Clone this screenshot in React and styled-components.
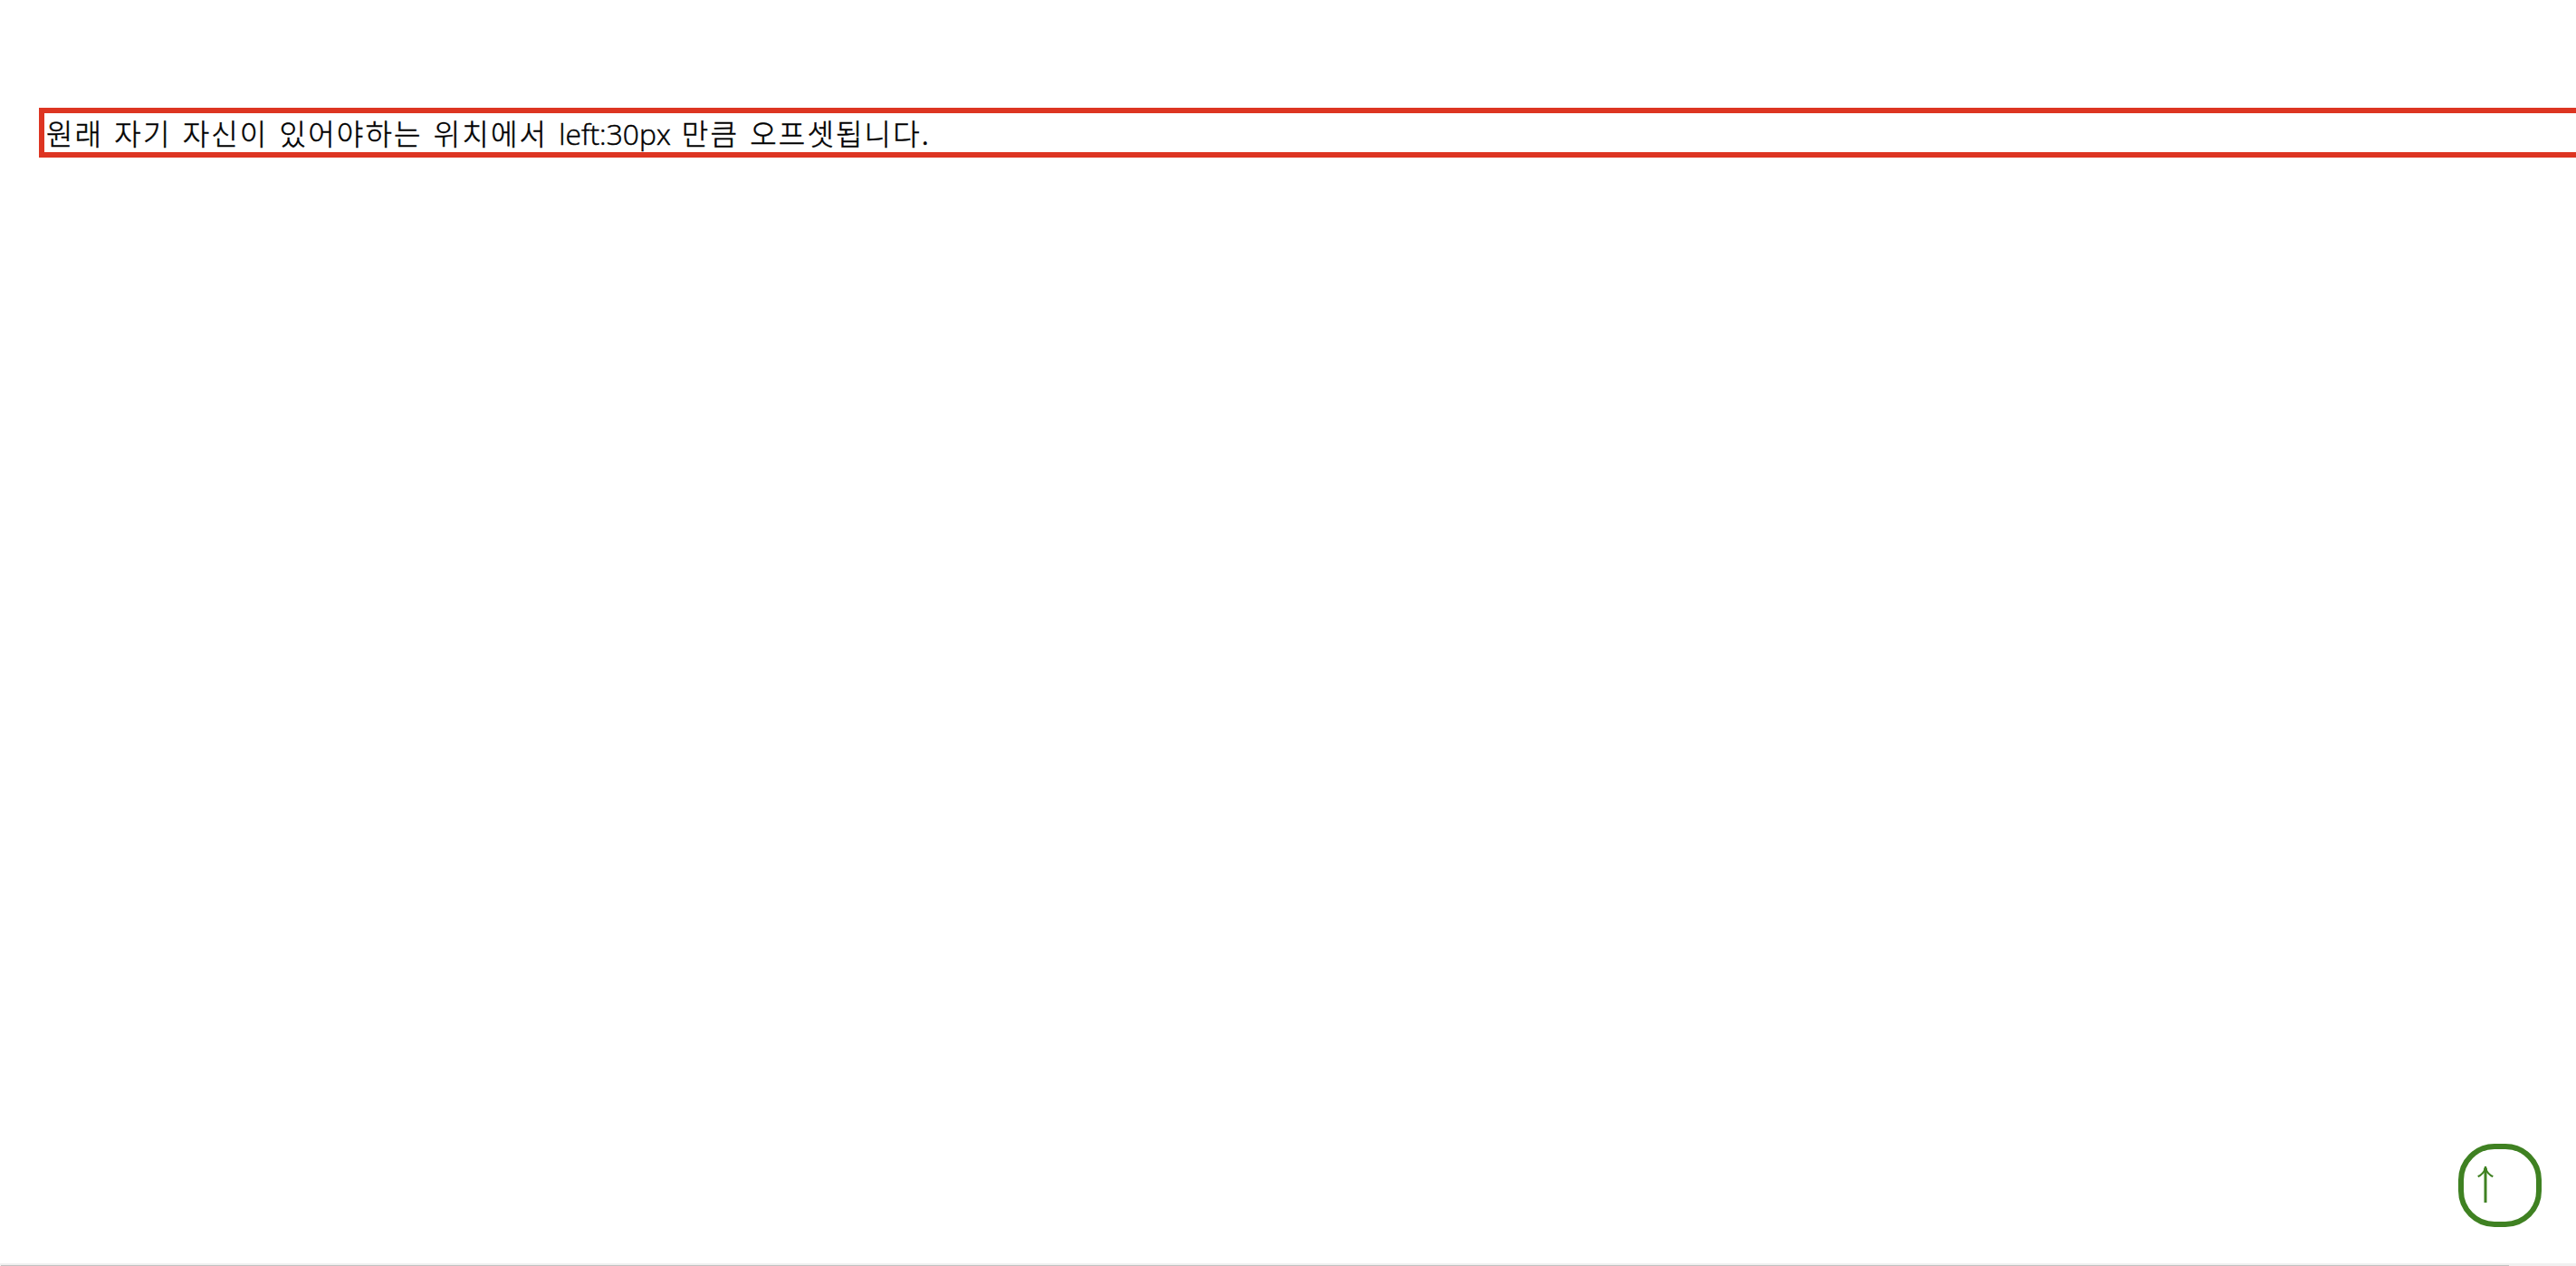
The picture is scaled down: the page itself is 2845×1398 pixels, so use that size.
import React from 'react';
import styled, { createGlobalStyle } from 'styled-components';

const GlobalStyle = createGlobalStyle`
    body {
        margin: 0;
        background-color: #fff;
        overflow: hidden;
    }
`;

const Page = styled.div`
    display: flex;
    flex-direction: column;
    height: 100vh;
    box-sizing: border-box;
    padding-top: 119px;
    overflow: hidden;
`;

const RelativeBox = styled.div`
    flex: none;
    box-sizing: border-box;
    height: 55px;
    margin-left: 43px;
    padding-left: 2px;
    border: 6px solid #dd3522;
    border-right: none;
    color: #000;
    font-family: "Noto Sans CJK KR", sans-serif;
    font-size: 32px;
    font-weight: 300;
    line-height: 42px;
    letter-spacing: 2.16px;
    word-spacing: 2.9px;
    white-space: nowrap;
    -webkit-text-stroke: 0.5px #000;
`;

const Code = styled.span`
    font-family: "Open Sans", sans-serif;
    font-size: 31.8px;
    letter-spacing: 0;
`;

const Footer = styled.div`
    display: flex;
    justify-content: flex-end;
    margin-top: auto;
    padding: 0 38px 40px 0;
`;

const TopButton = styled.button`
    display: flex;
    width: 92px;
    height: 92px;
    box-sizing: border-box;
    padding: 19px 0 0 15px;
    border: 6px solid #3f8122;
    border-radius: 40px;
    background-color: #fff;
    color: #3f8122;
    cursor: pointer;
`;

const Scrollbar = styled.div`
    flex: none;
    height: 3px;
    box-sizing: border-box;
    padding: 2px 74px 0 1px;
    background-color: #f0f0f0;
`;

const Thumb = styled.div`
    height: 1px;
    background-color: #c1c1c1;
`;

const ArrowUp = () => (
    <svg width="18" height="40" viewBox="0 0 18 40" fill="none" stroke="currentColor">
        <path d="M9 2V40" strokeWidth="3" />
        <path d="M0.7 11.2C4.5 9.7 7.4 6.5 9 2C10.6 6.5 13.5 9.7 17.3 11.2" strokeWidth="2.2" />
        <path d="M8 0H10L11 4H7Z" fill="currentColor" stroke="none" />
    </svg>
);

const App = () => {
    return (
        <>
            <GlobalStyle />
            <Page>
                <RelativeBox>
                    원래 자기 자신이 있어야하는 위치에서 <Code>left:30px</Code> 만큼 오프셋됩니다.
                </RelativeBox>
                <Footer>
                    <TopButton aria-label="top">
                        <ArrowUp />
                    </TopButton>
                </Footer>
                <Scrollbar>
                    <Thumb />
                </Scrollbar>
            </Page>
        </>
    );
};

export default App;
